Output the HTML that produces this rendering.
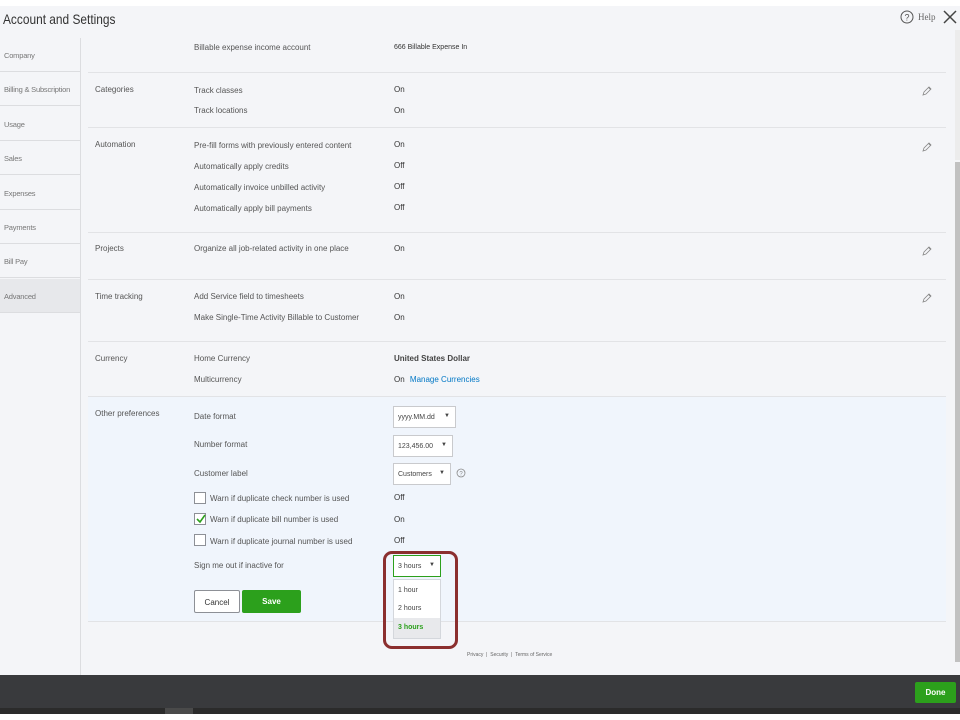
<!DOCTYPE html>
<html><head><style>
*{margin:0;padding:0;box-sizing:border-box}
body{width:960px;height:720px;position:relative;overflow:hidden;background:#f4f5f8;font-family:"Liberation Sans",sans-serif;color:#393a3d}
.a{position:absolute;white-space:nowrap}
.t{font-size:8px;color:#555}
.v{font-size:8px;color:#333}
.nav{position:absolute;left:0;width:80px;height:34px;border-bottom:1px solid #dcdde0;font-size:7.5px;color:#777;padding:13px 0 0 4px;overflow:hidden;letter-spacing:-.2px}
.hr{position:absolute;left:88px;width:858px;height:1px;background:#e2e3e6}
.sel{position:absolute;height:22px;background:#fff;border:1px solid #c9cacd;font-size:7px;color:#444;padding:7px 0 0 4px}
.sel:after{content:"▼";position:absolute;right:5px;top:6px;font-size:6px}
.cb{position:absolute;left:194px;width:12px;height:12px;border:1px solid #8d9096;background:#fff}
.pen{position:absolute;left:922px;width:10px;height:10px}
</style></head><body>
<div class="a" style="left:0;top:0;width:960px;height:6px;background:#fff"></div>
<div class="a" style="left:3px;top:11px;font-size:14px;color:#333;transform:scaleX(.85);transform-origin:left">Account and Settings</div>
<svg class="a" style="left:900px;top:10px" width="14" height="14"><circle cx="7" cy="7" r="6" fill="none" stroke="#555" stroke-width="1"/><text x="7" y="10.5" font-size="9" text-anchor="middle" fill="#555" font-family="Liberation Sans">?</text></svg>
<div class="a" style="left:918px;top:12px;font-size:9px;color:#666;font-family:'Liberation Serif',serif">Help</div>
<svg class="a" style="left:943px;top:10px" width="14" height="14"><path d="M1 1L13 13M13 1L1 13" stroke="#444" stroke-width="1.5"/></svg>

<div class="a" style="left:80px;top:38px;width:1px;height:637px;background:#dcdde0"></div>
<div class="nav" style="top:38px">Company</div>
<div class="nav" style="top:72px">Billing &amp; Subscription</div>
<div class="nav" style="top:107px">Usage</div>
<div class="nav" style="top:141px">Sales</div>
<div class="nav" style="top:176px">Expenses</div>
<div class="nav" style="top:210px">Payments</div>
<div class="nav" style="top:244px">Bill Pay</div>
<div class="nav" style="top:279px;background:#e7e8eb">Advanced</div>

<div class="a t" style="left:194px;top:43px">Billable expense income account</div>
<div class="a v" style="left:394px;top:44px;font-size:7px">666 Billable Expense In</div>
<div class="hr" style="top:72px"></div>
<div class="a t" style="left:95px;top:85px">Categories</div>
<div class="a t" style="left:194px;top:86px">Track classes</div><div class="a v" style="left:394px;top:85px">On</div>
<div class="a t" style="left:194px;top:106px">Track locations</div><div class="a v" style="left:394px;top:106px">On</div>
<div class="hr" style="top:127px"></div>
<div class="a t" style="left:95px;top:140px">Automation</div>
<div class="a t" style="left:194px;top:141px">Pre-fill forms with previously entered content</div><div class="a v" style="left:394px;top:140px">On</div>
<div class="a t" style="left:194px;top:162px">Automatically apply credits</div><div class="a v" style="left:394px;top:161px">Off</div>
<div class="a t" style="left:194px;top:183px">Automatically invoice unbilled activity</div><div class="a v" style="left:394px;top:182px">Off</div>
<div class="a t" style="left:194px;top:204px">Automatically apply bill payments</div><div class="a v" style="left:394px;top:203px">Off</div>
<div class="hr" style="top:232px"></div>
<div class="a t" style="left:95px;top:244px">Projects</div>
<div class="a t" style="left:194px;top:244px">Organize all job-related activity in one place</div><div class="a v" style="left:394px;top:244px">On</div>
<div class="hr" style="top:279px"></div>
<div class="a t" style="left:95px;top:292px">Time tracking</div>
<div class="a t" style="left:194px;top:292px">Add Service field to timesheets</div><div class="a v" style="left:394px;top:292px">On</div>
<div class="a t" style="left:194px;top:313px">Make Single-Time Activity Billable to Customer</div><div class="a v" style="left:394px;top:313px">On</div>
<div class="hr" style="top:341px"></div>
<div class="a t" style="left:95px;top:354px">Currency</div>
<div class="a t" style="left:194px;top:354px">Home Currency</div><div class="a v" style="left:394px;top:354px;font-weight:bold;color:#444">United States Dollar</div>
<div class="a t" style="left:194px;top:375px">Multicurrency</div><div class="a v" style="left:394px;top:375px">On <span style="color:#0077c5;margin-left:3px">Manage Currencies</span></div>

<svg class="pen" style="top:86px" viewBox="0 0 10 10"><path d="M1 9L2 6L7 1L9 3L4 8Z M6.5 1.5L8.5 3.5" fill="none" stroke="#888" stroke-width=".8"/></svg>
<svg class="pen" style="top:142px" viewBox="0 0 10 10"><path d="M1 9L2 6L7 1L9 3L4 8Z M6.5 1.5L8.5 3.5" fill="none" stroke="#888" stroke-width=".8"/></svg>
<svg class="pen" style="top:246px" viewBox="0 0 10 10"><path d="M1 9L2 6L7 1L9 3L4 8Z M6.5 1.5L8.5 3.5" fill="none" stroke="#888" stroke-width=".8"/></svg>
<svg class="pen" style="top:293px" viewBox="0 0 10 10"><path d="M1 9L2 6L7 1L9 3L4 8Z M6.5 1.5L8.5 3.5" fill="none" stroke="#888" stroke-width=".8"/></svg>

<div class="a" style="left:88px;top:396px;width:858px;height:226px;background:#f0f5fc;border-top:1px solid #e2e3e6;border-bottom:1px solid #e2e3e6"></div>
<div class="a t" style="left:95px;top:409px">Other preferences</div>
<div class="a t" style="left:194px;top:412px">Date format</div>
<div class="sel" style="left:393px;top:406px;width:63px">yyyy.MM.dd</div>
<div class="a t" style="left:194px;top:440px">Number format</div>
<div class="sel" style="left:393px;top:435px;width:60px">123,456.00</div>
<div class="a t" style="left:194px;top:469px">Customer label</div>
<div class="sel" style="left:393px;top:463px;width:58px">Customers</div>
<svg class="a" style="left:456px;top:468px" width="10" height="10"><circle cx="5" cy="5" r="4" fill="none" stroke="#888" stroke-width=".8"/><text x="5" y="7.5" font-size="6" text-anchor="middle" fill="#888" font-family="Liberation Sans">?</text></svg>
<div class="cb" style="top:492px"></div><div class="a t" style="left:210px;top:494px">Warn if duplicate check number is used</div><div class="a v" style="left:394px;top:493px">Off</div>
<div class="cb" style="top:513px"></div><svg class="a" style="left:196px;top:514px" width="10" height="10"><path d="M1 5L4 8L9 1" fill="none" stroke="#2ca01c" stroke-width="1.6"/></svg><div class="a t" style="left:210px;top:515px">Warn if duplicate bill number is used</div><div class="a v" style="left:394px;top:515px">On</div>
<div class="cb" style="top:534px"></div><div class="a t" style="left:210px;top:537px">Warn if duplicate journal number is used</div><div class="a v" style="left:394px;top:536px">Off</div>
<div class="a t" style="left:194px;top:561px">Sign me out if inactive for</div>
<div class="sel" style="left:393px;top:555px;width:48px;border-color:#2ca01c">3 hours</div>
<div class="a" style="left:393px;top:579px;width:48px;height:60px;background:#fff;border:1px solid #d4d7dc;font-size:7px;color:#444">
<div style="padding:7px 0 0 4px;height:19px">1 hour</div><div style="padding:6px 0 0 4px;height:19px">2 hours</div><div style="padding:6px 0 0 4px;height:20px;background:#e8e9ec;color:#2ca01c;font-weight:bold">3 hours</div></div>
<div class="a" style="left:383px;top:551px;width:75px;height:98px;border:3px solid #8b2f2f;border-radius:9px"></div>
<div class="a" style="left:194px;top:590px;width:46px;height:23px;background:#fff;border:1px solid #8d9096;border-radius:2px;font-size:8px;color:#333;text-align:center;padding-top:7px">Cancel</div>
<div class="a" style="left:242px;top:590px;width:59px;height:23px;background:#2ca01c;border-radius:2px;font-size:8px;color:#fff;font-weight:bold;text-align:center;padding-top:7px">Save</div>

<div class="a" style="left:467px;top:652px;font-size:5px;color:#666">Privacy &nbsp;|&nbsp; Security &nbsp;|&nbsp; Terms of Service</div>

<div class="a" style="left:955px;top:30px;width:5px;height:130px;background:#ececec"></div>
<div class="a" style="left:955px;top:162px;width:5px;height:500px;background:#c1c1c1"></div>

<div class="a" style="left:0;top:675px;width:960px;height:34px;background:#393a3d"></div>
<div class="a" style="left:915px;top:682px;width:41px;height:21px;background:#2ca01c;border-radius:2px;color:#fff;font-size:8px;font-weight:bold;text-align:center;padding-top:6px">Done</div>
<div class="a" style="left:0;top:708px;width:960px;height:12px;background:#2b2b2b"></div>
<div class="a" style="left:165px;top:708px;width:28px;height:12px;background:#4a4a4a"></div>
<div class="a" style="left:0;top:714px;width:960px;height:6px;background:#fff"></div>
</body></html>
